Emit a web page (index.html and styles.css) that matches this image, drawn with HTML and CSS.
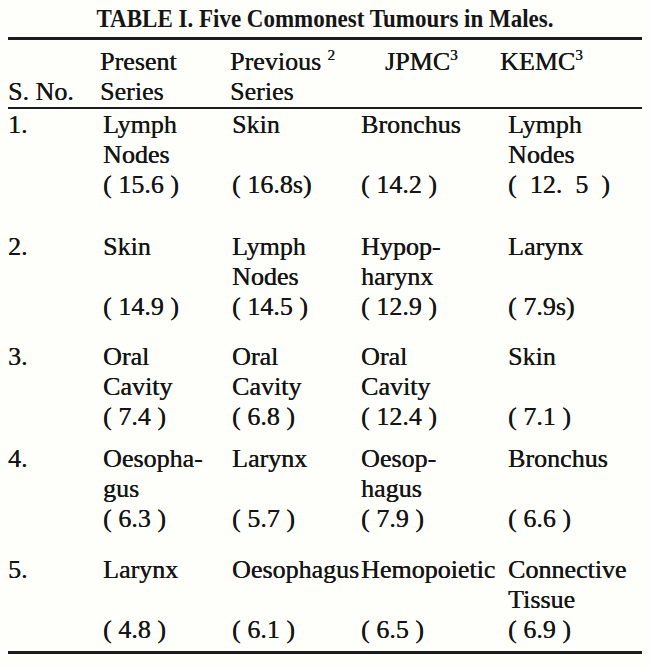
FILE: index.html
```html
<!DOCTYPE html>
<html>
<head>
<meta charset="utf-8">
<link rel="stylesheet" href="styles.css">
</head>
<body>
<div class="page">
  <div class="title">TABLE I. Five Commonest Tumours in Males.</div>
  <div class="rule rule-top"></div>
  <div class="head">
    <div class="hcell c1"><span></span><span>S. No.</span></div>
    <div class="hcell c2"><span>Present</span><span>Series</span></div>
    <div class="hcell c3"><span>Previous <sup>2</sup></span><span>Series</span></div>
    <div class="hcell c4"><span class="jpmc">JPMC<sup>3</sup></span><span></span></div>
    <div class="hcell c5"><span class="kemc">KEMC<sup>3</sup></span><span></span></div>
  </div>
  <div class="rule rule-mid"></div>

  <div class="row r1">
    <div class="cell"><span>1.</span></div>
    <div class="cell c2"><span>Lymph<br>Nodes</span><span>( 15.6 )</span></div>
    <div class="cell c3"><span>Skin</span><span>( 16.8s)</span></div>
    <div class="cell c4"><span>Bronchus</span><span>( 14.2 )</span></div>
    <div class="cell c5"><span>Lymph<br>Nodes</span><span class="pre">(  12.  5  )</span></div>
  </div>

  <div class="row r2">
    <div class="cell"><span>2.</span></div>
    <div class="cell c2"><span>Skin</span><span>( 14.9 )</span></div>
    <div class="cell c3"><span>Lymph<br>Nodes</span><span>( 14.5 )</span></div>
    <div class="cell c4"><span>Hypop-<br>harynx</span><span>( 12.9 )</span></div>
    <div class="cell c5"><span>Larynx</span><span>( 7.9s)</span></div>
  </div>

  <div class="row r3">
    <div class="cell"><span>3.</span></div>
    <div class="cell c2"><span>Oral<br>Cavity</span><span>( 7.4 )</span></div>
    <div class="cell c3"><span>Oral<br>Cavity</span><span>( 6.8 )</span></div>
    <div class="cell c4"><span>Oral<br>Cavity</span><span>( 12.4 )</span></div>
    <div class="cell c5"><span>Skin</span><span>( 7.1 )</span></div>
  </div>

  <div class="row r4">
    <div class="cell"><span>4.</span></div>
    <div class="cell c2"><span>Oesopha-<br>gus</span><span>( 6.3 )</span></div>
    <div class="cell c3"><span>Larynx</span><span>( 5.7 )</span></div>
    <div class="cell c4"><span>Oesop-<br>hagus</span><span>( 7.9 )</span></div>
    <div class="cell c5"><span>Bronchus</span><span>( 6.6 )</span></div>
  </div>

  <div class="row r5">
    <div class="cell"><span>5.</span></div>
    <div class="cell c2"><span>Larynx</span><span>( 4.8 )</span></div>
    <div class="cell c3"><span>Oesophagus</span><span>( 6.1 )</span></div>
    <div class="cell c4"><span>Hemopoietic</span><span>( 6.5 )</span></div>
    <div class="cell c5"><span>Connective<br>Tissue</span><span>( 6.9 )</span></div>
  </div>

  <div class="rule rule-bottom"></div>
</div>
</body>
</html>
```

FILE: styles.css
```css
html, body {
  margin: 0;
  padding: 0;
  background: #fefefb;
}

.page {
  padding: 4px 8px 0 8px;
  font-family: "Liberation Serif", "Times New Roman", serif;
  font-size: 26px;
  line-height: 30px;
  color: #151515;
  text-shadow: 0.35px 0 0 #151515;
}

.title {
  text-align: center;
  font-weight: bold;
  font-size: 23px;
  line-height: 30px;
  transform: scaleY(1.12);
  text-shadow: none;
}

.rule {
  background: #1c1c1c;
}

.rule-top {
  height: 3px;
  margin-top: 3px;
}

.rule-mid {
  height: 2px;
}

.rule-bottom {
  height: 3px;
  margin-top: 6px;
}

.head,
.row {
  display: grid;
  grid-template-columns: 92px 130px 130px 148px 1fr;
}

.head {
  margin-top: 7px;
}

.hcell {
  display: flex;
  flex-direction: column;
  height: 60px;
}

.hcell span {
  height: 30px;
  white-space: nowrap;
}

.jpmc {
  padding-left: 25px;
}

.kemc {
  margin-left: -8px;
}

sup {
  font-size: 15px;
  line-height: 0;
  vertical-align: 10px;
}

.row {
  height: 90px;
}

.cell {
  display: flex;
  flex-direction: column;
  justify-content: space-between;
  white-space: nowrap;
}

.cell.c2 {
  padding-left: 3px;
}

.cell.c3 {
  padding-left: 2px;
}

.cell.c4 {
  padding-left: 1px;
}

.pre {
  white-space: pre;
}

.r1 { margin-top: 1px; }
.r2 { margin-top: 32px; }
.r3 { margin-top: 20px; }
.r4 { margin-top: 12px; }
.r5 { margin-top: 21px; }
```
